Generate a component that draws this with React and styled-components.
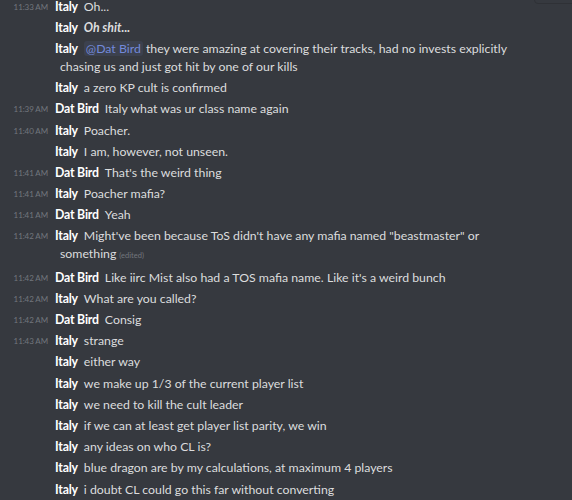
import React from "react";
import styled, { createGlobalStyle } from "styled-components";

const Global = createGlobalStyle`
  html, body { margin: 0; padding: 0; background: #36393f; }
  body { font-family: Lato, "Noto Sans", sans-serif; overflow: hidden; }
`;

const Chat = styled.div`
  position: relative;
  width: 572px;
  height: 500px;
  overflow: hidden;
  background: #36393f;
`;

const List = styled.div`
  margin-top: -4px;
  padding-right: 50px;
`;

const Row = styled.div`
  display: flex;
  align-items: flex-start;
  padding: 1.6px 0;
  line-height: 18px;
`;

const Time = styled.span`
  flex: 0 0 48px;
  text-align: right;
  font-size: 8px;
  letter-spacing: -0.1px;
  line-height: 17px;
  padding-top: 1px;
  color: #72767d;
  white-space: nowrap;
  visibility: ${(p) => (p.$hidden ? "hidden" : "visible")};
`;

const Content = styled.div`
  padding-left: 12px;
  text-indent: -5px;
  font-size: 12.3px;
  line-height: 18px;
  color: #dcddde;
`;

const Name = styled.span`
  color: #ffffff;
  font-weight: 700;
  letter-spacing: -0.2px;
  margin-right: 6px;
`;

const Strong = styled.em`
  font-weight: 700;
  font-style: italic;
  color: #dcddde;
`;

const Mention = styled.span`
  color: #7289da;
  background: rgba(114, 137, 218, 0.1);
  border-radius: 3px;
  padding: 0 2px;
`;

const Edited = styled.span`
  font-size: 7.5px;
  color: #72767d;
  margin-left: 3px;
`;

const Toolbar = styled.div`
  position: absolute;
  top: -20px;
  right: -4px;
  width: 40px;
  height: 22px;
  background: #36393f;
  border: 1px solid #2f3136;
  border-radius: 4px;
`;

const messages = [
  { t: "11:33 AM", n: "Italy", c: "Oh..." },
  { n: "Italy", c: <Strong>Oh shit...</Strong> },
  {
    n: "Italy",
    c: (
      <>
        <Mention>@Dat Bird</Mention> they were amazing at covering their tracks, had no invests explicitly
        chasing us and just got hit by one of our kills
      </>
    ),
  },
  { n: "Italy", c: "a zero KP cult is confirmed" },
  { t: "11:39 AM", n: "Dat Bird", c: "Italy what was ur class name again" },
  { t: "11:40 AM", n: "Italy", c: "Poacher." },
  { n: "Italy", c: "I am, however, not unseen." },
  { t: "11:41 AM", n: "Dat Bird", c: "That's the weird thing" },
  { t: "11:41 AM", n: "Italy", c: "Poacher mafia?" },
  { t: "11:41 AM", n: "Dat Bird", c: "Yeah" },
  {
    t: "11:42 AM",
    n: "Italy",
    c: (
      <>
        Might've been because ToS didn't have any mafia named "beastmaster" or something
        <Edited>(edited)</Edited>
      </>
    ),
  },
  { t: "11:42 AM", n: "Dat Bird", c: "Like iirc Mist also had a TOS mafia name. Like it's a weird bunch" },
  { t: "11:42 AM", n: "Italy", c: "What are you called?" },
  { t: "11:42 AM", n: "Dat Bird", c: "Consig" },
  { t: "11:43 AM", n: "Italy", c: "strange" },
  { n: "Italy", c: "either way" },
  { n: "Italy", c: "we make up 1/3 of the current player list" },
  { n: "Italy", c: "we need to kill the cult leader" },
  { n: "Italy", c: "if we can at least get player list parity, we win" },
  { n: "Italy", c: "any ideas on who CL is?" },
  { n: "Italy", c: "blue dragon are by my calculations, at maximum 4 players" },
  { n: "Italy", c: "i doubt CL could go this far without converting" },
];

export default function App() {
  return (
    <Chat>
      <Global />
      <Toolbar />
      <List>
        {messages.map((m, i) => (
          <Row key={i}>
            <Time $hidden={!m.t}>{m.t || "00:00 AM"}</Time>
            <Content>
              <Name>{m.n}</Name>
              {m.c}
            </Content>
          </Row>
        ))}
      </List>
    </Chat>
  );
}
